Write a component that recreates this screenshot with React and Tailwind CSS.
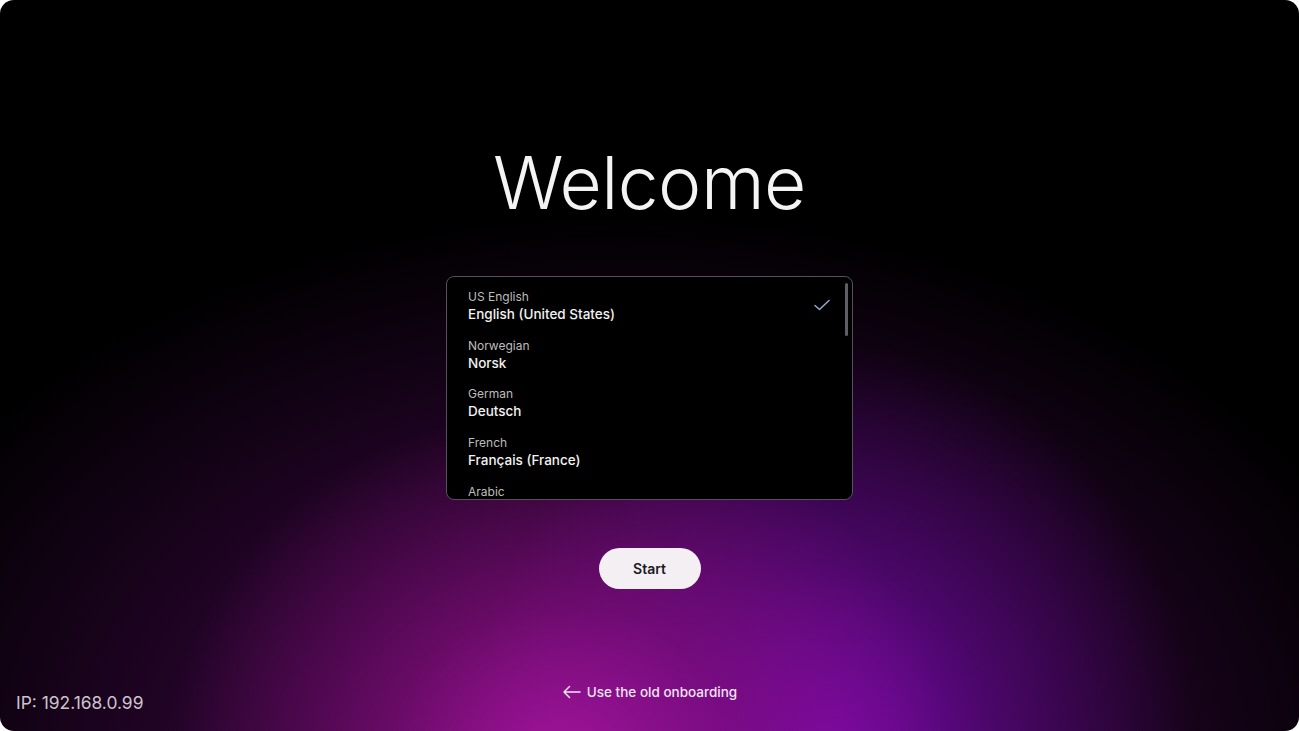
import React from 'react';

const languages = [
    { label: 'US English', name: 'English (United States)', selected: true },
    { label: 'Norwegian', name: 'Norsk' },
    { label: 'German', name: 'Deutsch' },
    { label: 'French', name: 'Français (France)' },
    { label: 'Arabic' },
];

const CheckIcon = () => (
    <svg width="18" height="14" viewBox="0 0 18 14" fill="none">
        <path d="M2 7.5 L6.5 11.5 L16 2.5" stroke="#8fa6c8" strokeWidth="1.6" strokeLinecap="round" strokeLinejoin="round" />
    </svg>
);

const ArrowLeft = () => (
    <svg width="19" height="14" viewBox="0 0 19 14" fill="none">
        <path d="M18 7 H2 M7.5 1.5 L2 7 L7.5 12.5" stroke="#f3e3f3" strokeWidth="1.5" strokeLinecap="round" strokeLinejoin="round" />
    </svg>
);

const App = () => {
    return (
        <div className="h-[731px] w-[1299px] overflow-hidden bg-white font-['Inter',sans-serif]">
            <main className="flex h-full w-full flex-col overflow-hidden rounded-[14px] bg-black bg-[radial-gradient(ellipse_30%_48%_at_43%_104%,#a0139a_0%,rgba(140,14,130,0.55)_45%,transparent_100%),radial-gradient(ellipse_28%_55%_at_64%_102%,#7608a8_0%,rgba(100,8,150,0.55)_45%,transparent_100%),radial-gradient(ellipse_62%_75%_at_48%_104%,#5a0c64_0%,rgba(70,8,80,0.65)_40%,transparent_100%)]">

                {/* Titre */}
                <div className="flex justify-center pt-[141px]">
                    <h1 className="text-[73px] font-light leading-[84px] tracking-[-0.5px] text-[#f4f4f4]">
                        Welcome
                    </h1>
                </div>

                {/* Liste des langues */}
                <div className="mt-[51px] flex justify-center">
                    <div className="relative h-[224px] w-[407px] overflow-hidden rounded-[8px] border border-[#55505c] bg-black">
                        <ul className="flex flex-col px-[21px] pt-[11px]">
                            {languages.map((lang) => (
                                <li key={lang.label} className="flex h-[48.7px] items-start justify-between">
                                    <div>
                                        <p className="text-[12px] leading-[17px] text-[#bdbdbd]">{lang.label}</p>
                                        {lang.name && (
                                            <p className="text-[13.5px] font-medium leading-[18px] text-[#f2f2f2]">{lang.name}</p>
                                        )}
                                    </div>
                                    {lang.selected && (
                                        <div className="mt-[10px]">
                                            <CheckIcon />
                                        </div>
                                    )}
                                </li>
                            ))}
                        </ul>
                        <div className="absolute right-[4px] top-[6px] h-[53px] w-[3px] rounded-full bg-[#5e5e66]" />
                    </div>
                </div>

                {/* Bouton */}
                <div className="mt-[48px] flex justify-center">
                    <button className="h-[41px] w-[102px] rounded-full bg-[#f3eff3] text-[14px] font-semibold text-[#1b1b1f]">
                        Start
                    </button>
                </div>

                {/* Bas de page */}
                <div className="mt-auto grid grid-cols-3 items-end px-[16px] pb-[16px]">
                    <span className="text-[17.4px] leading-[24px] text-[#cdc3cd]">IP: 192.168.0.99</span>
                    <button className="mb-[13px] flex items-center justify-center gap-[6px] whitespace-nowrap text-[13.5px] font-medium text-[#f3e3f3]">
                        <ArrowLeft />
                        Use the old onboarding
                    </button>
                    <span />
                </div>
            </main>
        </div>
    );
};

export default App;
